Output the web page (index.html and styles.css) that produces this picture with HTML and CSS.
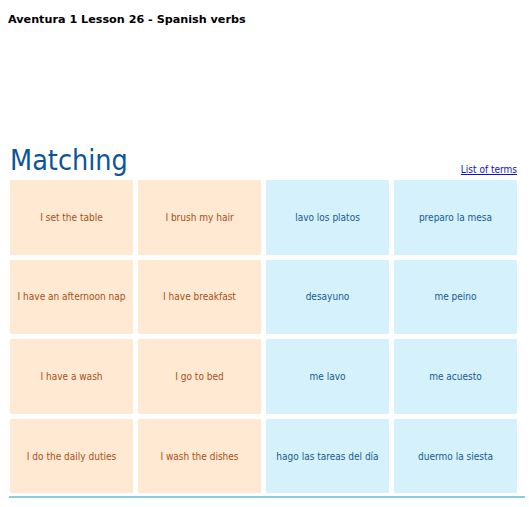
FILE: index.html
```html
<!DOCTYPE html>
<html>
<head>
<meta charset="utf-8">
<link rel="stylesheet" href="styles.css">
</head>
<body>
<h1 class="title">Aventura 1 Lesson 26 - Spanish verbs</h1>
<div class="spacer"></div>
<section class="activity">
  <div class="head">
    <h2 class="heading">Matching</h2>
    <a class="terms" href="#">List of terms</a>
  </div>
  <div class="grid">
    <div class="card en">I set the table</div>
    <div class="card en">I brush my hair</div>
    <div class="card es">lavo los platos</div>
    <div class="card es">preparo la mesa</div>
    <div class="card en">I have an afternoon nap</div>
    <div class="card en">I have breakfast</div>
    <div class="card es">desayuno</div>
    <div class="card es">me peino</div>
    <div class="card en">I have a wash</div>
    <div class="card en">I go to bed</div>
    <div class="card es">me lavo</div>
    <div class="card es">me acuesto</div>
    <div class="card en">I do the daily duties</div>
    <div class="card en">I wash the dishes</div>
    <div class="card es">hago las tareas del día</div>
    <div class="card es">duermo la siesta</div>
  </div>
</section>
</body>
</html>
```

FILE: styles.css
```css
html, body {
  margin: 0;
  padding: 0;
  background: #ffffff;
}
body {
  font-family: "DejaVu Sans Condensed", "DejaVu Sans", sans-serif;
  font-stretch: condensed;
}
.title {
  margin: 0;
  padding: 13px 0 0 8px;
  font-family: "DejaVu Sans", sans-serif;
  font-stretch: normal;
  font-size: 11.2px;
  font-weight: bold;
  line-height: 13px;
  color: #000;
}
.spacer {
  height: 118px;
}
.activity {
  margin-left: 9px;
  width: 516px;
  border-bottom: 2px solid #8ecae2;
  padding-bottom: 3px;
}
.head {
  display: flex;
  justify-content: space-between;
  align-items: flex-end;
  width: 508px;
  margin-bottom: 3px;
}
.heading {
  margin: 0 0 0 1px;
  font-size: 28.5px;
  font-weight: normal;
  line-height: 33px;
  color: #0e5597;
}
.terms {
  font-size: 10px;
  color: #1010c8;
  text-decoration: underline;
  line-height: 12px;
  margin-bottom: 1px;
}
.grid {
  margin-left: 1px;
  width: 507px;
  display: grid;
  grid-template-columns: repeat(4, 123px);
  grid-template-rows: repeat(4, 74.6px);
  gap: 5px;
}
.card {
  display: flex;
  align-items: center;
  justify-content: center;
  text-align: center;
  font-size: 10px;
}
.en {
  background: #ffe9d2;
  color: #a4501a;
}
.es {
  background: #d4f1fc;
  color: #1b5a8c;
}
```
